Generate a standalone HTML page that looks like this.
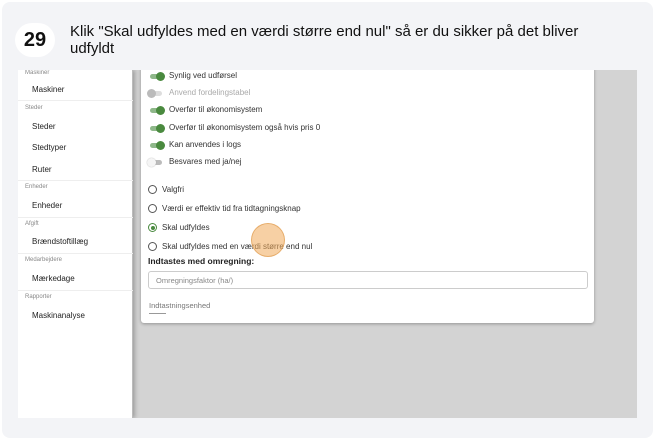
<!DOCTYPE html>
<html><head><meta charset="utf-8"><style>
*{margin:0;padding:0;box-sizing:border-box}
body{width:655px;height:440px;background:#fff;font-family:"Liberation Sans",sans-serif;position:relative;overflow:hidden}
.card{position:absolute;left:2px;top:2px;width:651px;height:436px;background:#f3f4f7;border-radius:8px}
.num{position:absolute;left:15px;top:23px;width:40px;height:34px;border-radius:17px;background:#fff;font-size:20px;font-weight:bold;text-align:center;line-height:34px;color:#111}
.title{position:absolute;left:70px;top:23px;font-size:15px;line-height:17px;color:#111;width:530px}
.shot{position:absolute;left:18px;top:70px;width:619px;height:348px;background:#d3d3d3;overflow:hidden}
.side{position:absolute;left:0;top:0;width:115px;height:348px;background:#fff;border-right:1px solid #bbb;box-shadow:2px 0 4px rgba(0,0,0,.25)}
.sh{position:absolute;left:7px;font-size:6px;color:#888}
.si{position:absolute;left:14px;font-size:8px;color:#222}
.ln{position:absolute;left:0;width:115px;border-top:1px solid #eee}
.panel{position:absolute;left:123px;top:-5px;width:453px;height:258px;background:#fff;border-radius:3px;box-shadow:0 1px 3px rgba(0,0,0,.3)}
.row{position:absolute;left:7px;font-size:8px;color:#333;display:flex;align-items:center}
.tg{width:16px;height:8px;position:relative;margin-right:5px}
.tg .t{position:absolute;left:2px;top:2px;width:12px;height:5px;border-radius:3px;background:#8fb88a}
.tg .k{position:absolute;right:-1px;top:0;width:9px;height:9px;border-radius:50%;background:#4a8a3f}
.tg.off .t{background:#bbb}.tg.off .k{left:-1px;background:#f5f5f5;box-shadow:0 0 1px #999}
.tg.dis .t{background:#ddd}.tg.dis .k{left:-1px;background:#bbb}
.rd{width:9px;height:9px;border:1px solid #555;border-radius:50%;margin-right:5px;position:relative}
.rd.on{border-color:#4a8a3f}.rd.on::after{content:"";position:absolute;left:1.5px;top:1.5px;width:4px;height:4px;border-radius:50%;background:#4a8a3f}
</style></head><body>
<div class="card"></div>
<div class="num">29</div>
<div class="title">Klik "Skal udfyldes med en værdi større end nul" så er du sikker på det bliver udfyldt</div>
<div class="shot">
 <div class="side">
  <div class="sh" style="top:0">Maskiner</div>
  <div class="si" style="top:15px">Maskiner</div>
  <div class="ln" style="top:30px"></div>
  <div class="sh" style="top:35px">Steder</div>
  <div class="si" style="top:52px">Steder</div>
  <div class="si" style="top:73px">Stedtyper</div>
  <div class="si" style="top:95px">Ruter</div>
  <div class="ln" style="top:110px"></div>
  <div class="sh" style="top:114px">Enheder</div>
  <div class="si" style="top:131px">Enheder</div>
  <div class="ln" style="top:147px"></div>
  <div class="sh" style="top:151px">Afgift</div>
  <div class="si" style="top:167px">Brændstoftillæg</div>
  <div class="ln" style="top:183px"></div>
  <div class="sh" style="top:187px">Medarbejdere</div>
  <div class="si" style="top:204px">Mærkedage</div>
  <div class="ln" style="top:220px"></div>
  <div class="sh" style="top:224px">Rapporter</div>
  <div class="si" style="top:241px">Maskinanalyse</div>
 </div>
 <div class="panel">
  <div class="row" style="top:6px"><div class="tg"><div class="t"></div><div class="k"></div></div>Synlig ved udførsel</div>
  <div class="row" style="top:23px;color:#aaa"><div class="tg dis"><div class="t"></div><div class="k"></div></div>Anvend fordelingstabel</div>
  <div class="row" style="top:40px"><div class="tg"><div class="t"></div><div class="k"></div></div>Overfør til økonomisystem</div>
  <div class="row" style="top:58px"><div class="tg"><div class="t"></div><div class="k"></div></div>Overfør til økonomisystem også hvis pris 0</div>
  <div class="row" style="top:75px"><div class="tg"><div class="t"></div><div class="k"></div></div>Kan anvendes i logs</div>
  <div class="row" style="top:92px"><div class="tg off"><div class="t"></div><div class="k"></div></div>Besvares med ja/nej</div>
  <div class="row" style="top:120px"><div class="rd"></div>Valgfri</div>
  <div class="row" style="top:139px"><div class="rd"></div>Værdi er effektiv tid fra tidtagningsknap</div>
  <div class="row" style="top:158px"><div class="rd on"></div>Skal udfyldes</div>
  <div class="row" style="top:177px"><div class="rd"></div>Skal udfyldes med en værdi større end nul</div>
  <div class="row" style="top:191px;font-weight:bold;font-size:8.5px;color:#222">Indtastes med omregning:</div>
  <div style="position:absolute;left:7px;top:206px;width:440px;height:18px;border:1px solid #ccc;border-radius:3px;font-size:7.5px;color:#888;padding:4px 7px">Omregningsfaktor (ha/)</div>
  <div style="position:absolute;left:8px;top:236px;font-size:7.5px;color:#777">Indtastningsenhed</div>
  <div style="position:absolute;left:8px;top:248px;width:17px;border-top:1px solid #999"></div>
 </div>
 <div style="position:absolute;left:233px;top:153px;width:34px;height:34px;border-radius:50%;background:rgba(240,170,90,.55);border:1px solid rgba(220,150,70,.6)"></div>
</div>
</body></html>
